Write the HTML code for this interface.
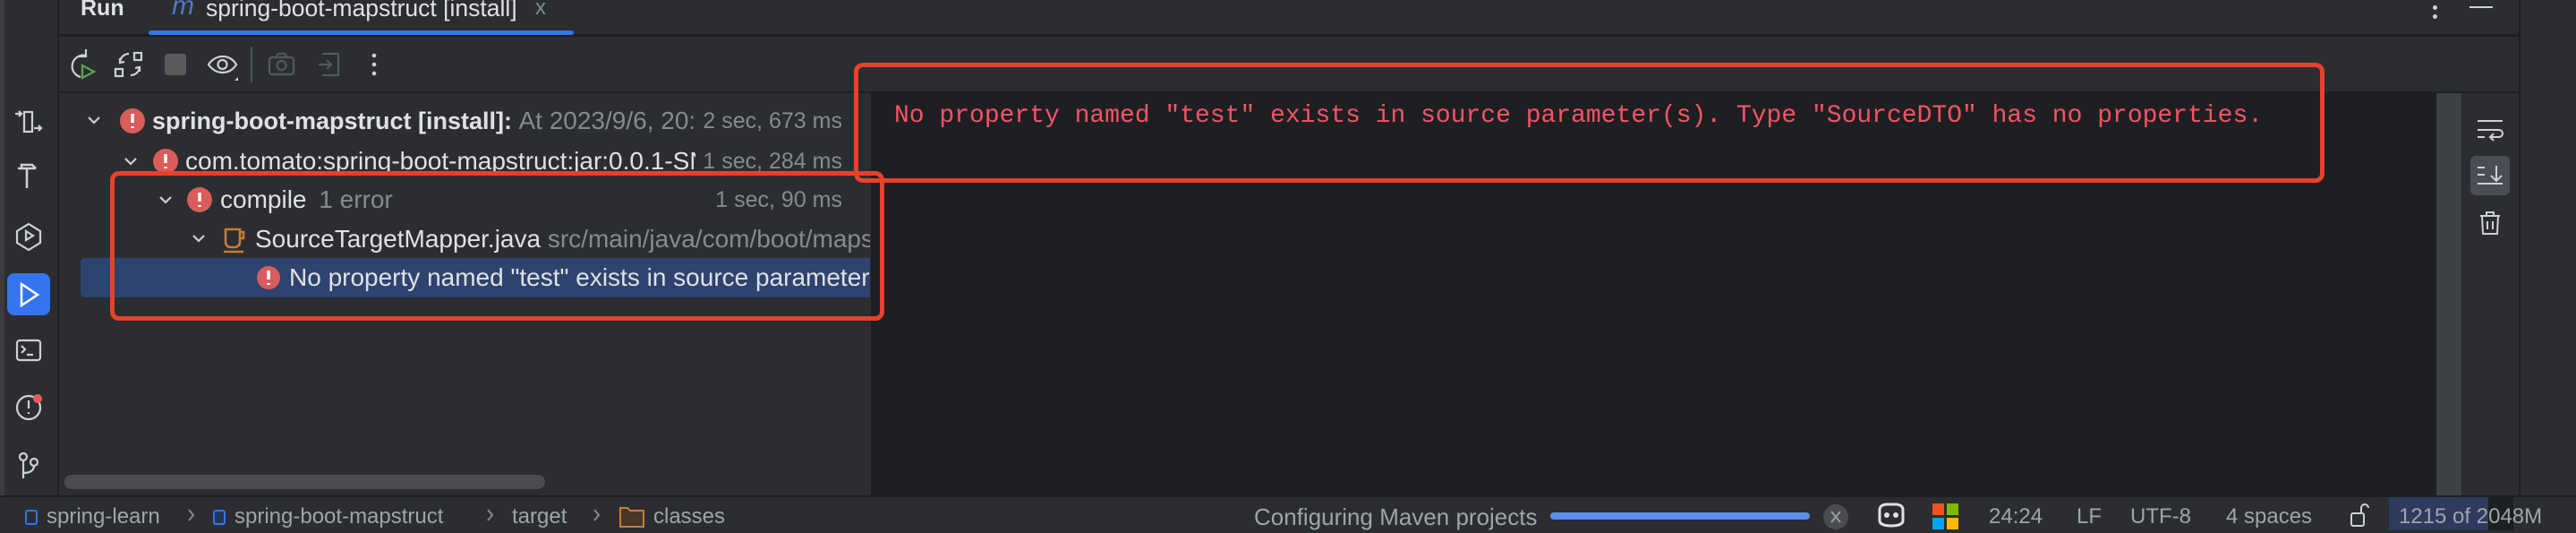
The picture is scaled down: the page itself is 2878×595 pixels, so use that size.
<!DOCTYPE html>
<html><head><meta charset="utf-8"><style>
*{margin:0;padding:0;box-sizing:border-box}
body{width:2878px;height:592px;background:#2b2d30;position:relative;overflow:hidden;font-family:"Liberation Sans",sans-serif;color:#dfe1e5}
.a{position:absolute;white-space:nowrap}
.g{color:#868a91}
svg{position:absolute;overflow:visible}
.t{font-size:28px;line-height:30px}
.tm{font-size:25px;line-height:30px;text-align:right;width:164px;left:777px;background:#2b2d30}
</style></head><body>
<div class="a" style="left:0;top:0;width:5px;height:553px;background:#3a3c40"></div>
<div class="a" style="left:64px;top:0;width:2px;height:553px;background:#1e1f22"></div>
<div class="a" style="left:66px;top:38px;width:2748px;height:3px;background:#1e1f22"></div>
<div class="a" style="left:66px;top:102px;width:2748px;height:2px;background:#1e1f22"></div>
<div class="a" style="left:2814px;top:0;width:2px;height:553px;background:#1e1f22"></div>
<div class="a" style="left:90px;top:-6px;font-size:25px;font-weight:bold;line-height:30px">Run</div>
<div class="a" style="left:192px;top:-8px;font-size:30px;font-style:italic;color:#4f7bd0;line-height:30px">m</div>
<div class="a" style="left:230px;top:-6px;font-size:26.5px;line-height:30px">spring-boot-mapstruct [install]</div>
<div class="a g" style="left:598px;top:-6px;font-size:24px;line-height:30px">x</div>
<div class="a" style="left:166px;top:34px;width:475px;height:5px;border-radius:3px;background:#3574f0"></div>
<div class="a" style="left:2718px;top:6px;width:5px;height:5px;border-radius:50%;background:#ced0d6"></div>
<div class="a" style="left:2718px;top:16px;width:5px;height:5px;border-radius:50%;background:#ced0d6"></div>
<div class="a" style="left:2759px;top:7px;width:26px;height:2px;background:#ced0d6"></div>
<svg style="left:0;top:0" width="500" height="110" fill="none" stroke-width="2.2">
 <path d="M96 62 A12 12 0 1 0 90 86" stroke="#ced0d6"/><path d="M96 55v8h-8" stroke="#ced0d6"/>
 <path d="M92 73l13 7-13 7z" stroke="#57a64a"/>
 <rect x="150" y="59" width="8" height="8" stroke="#ced0d6"/><rect x="129" y="77" width="8" height="8" stroke="#ced0d6"/>
 <path d="M144 60a10 10 0 0 0-10 10M134 65l0 5 5-1" stroke="#ced0d6"/><path d="M146 84a10 10 0 0 0 10-9M156 80l0-5-5 1" stroke="#ced0d6"/>
 <rect x="184" y="60" width="24" height="24" rx="3" fill="#5a5a5a" stroke="none"/>
 <path d="M233 72c8-12 24-12 31 0c-7 12-23 12-31 0z" stroke="#ced0d6"/><circle cx="248.5" cy="72" r="5" stroke="#ced0d6"/>
 <path d="M262 90l4-4v4z" fill="#ced0d6" stroke="none"/>
 <path d="M281 52v40" stroke="#4e5157"/>
 <rect x="301" y="64" width="27" height="19" rx="3" stroke="#55585e"/><circle cx="314.5" cy="73" r="5" stroke="#55585e"/><path d="M308 64l3-4h7l3 4" stroke="#55585e"/>
 <path d="M360 60h18v24h-18M356 72h14M365 67l5 5-5 5" stroke="#55585e"/>
 <circle cx="418" cy="62" r="2.3" fill="#ced0d6" stroke="none"/><circle cx="418" cy="72" r="2.3" fill="#ced0d6" stroke="none"/><circle cx="418" cy="82" r="2.3" fill="#ced0d6" stroke="none"/>
</svg>
<svg style="left:0;top:0" width="64" height="553" fill="none" stroke="#ced0d6" stroke-width="2.2">
 <rect x="27" y="125" width="9" height="22"/><path d="M17 127h7M21 124l3 3-3 3M38 143h8M43 140l3 3-3 3"/>
 <path d="M20 188h20M24 188v-4h12l4 4M30 188v22" stroke-width="2.6"/>
 <path d="M32 250l13 8v13l-13 8-13-8v-13z"/><path d="M29 258l8 5-8 5z"/>
 <rect x="8" y="305" width="48" height="47" rx="8" fill="#3574f0" stroke="none"/><path d="M24 317l18 12-18 12z" stroke="#fff" stroke-width="2.5"/>
 <rect x="19" y="380" width="26" height="22" rx="3"/><path d="M24 386l4 4-4 4M30 396h7"/>
 <circle cx="32" cy="455" r="13"/><path d="M32 447v9M32 460v2"/><circle cx="42" cy="445" r="5" fill="#e55b5b" stroke="none"/>
 <circle cx="26" cy="510" r="4"/><circle cx="38" cy="516" r="4"/><path d="M26 514v20M38 520c0 6-6 8-12 8"/>
</svg>
<div class="a" style="left:90px;top:288px;width:882px;height:44px;background:#2e436e;border-radius:5px 0 0 5px"></div>
<svg style="left:0;top:0" width="980" height="360" fill="none" stroke="#ced0d6" stroke-width="2.2">
 <path d="M99 131l6 6 6-6M140 177l6 6 6-6M179 220l6 6 6-6M216 263l6 6 6-6"/>
 <circle cx="148" cy="135" r="14" fill="#db5c5c" stroke="none"/>
 <circle cx="185" cy="180" r="14" fill="#db5c5c" stroke="none"/>
 <circle cx="223" cy="223" r="14" fill="#db5c5c" stroke="none"/>
 <circle cx="300" cy="310" r="13" fill="#db5c5c" stroke="none"/>
 <g stroke="#fff" stroke-width="3.5"><path d="M148 127v10M185 172v10M223 215v10M300 302v10"/><path d="M148 141v2M185 186v2M223 229v2M300 316v2"/></g>
 <path d="M252 256h16v14c0 4-3 6-6 6h-4c-3 0-6-2-6-6zM268 259h4v7h-4M250 281h22" stroke="#c77c3c" stroke-width="2.6"/>
</svg>
<div class="a t" style="left:170px;top:120px;font-weight:bold;font-size:27px;width:606px;overflow:hidden">spring-boot-mapstruct [install]: <span class="g" style="font-weight:normal;font-size:28px">At 2023/9/6, 20:30</span></div>
<div class="a tm g" style="top:120px">2 sec, 673 ms</div>
<div class="a t" style="left:207px;top:165px;width:570px;overflow:hidden">com.tomato:spring-boot-mapstruct:jar:0.0.1-SNAPSHOT</div>
<div class="a tm g" style="top:165px">1 sec, 284 ms</div>
<div class="a t" style="left:246px;top:208px">compile <span class="g" style="margin-left:6px">1 error</span></div>
<div class="a tm g" style="top:208px">1 sec, 90 ms</div>
<div class="a t" style="left:285px;top:252px;width:687px;overflow:hidden">SourceTargetMapper.java <span class="g">src/main/java/com/boot/mapstruct</span></div>
<div class="a t" style="left:323px;top:295px;width:649px;overflow:hidden">No property named "test" exists in source parameter(s).</div>
<div class="a" style="left:72px;top:530px;width:537px;height:16px;border-radius:8px;background:#4a4c50"></div>
<div class="a" style="left:973px;top:104px;width:1749px;height:449px;background:#1e1f22"></div>
<div class="a" style="left:2722px;top:104px;width:28px;height:449px;background:#3e4145"></div>
<div class="a" style="left:999px;top:112px;font-family:'Liberation Mono',monospace;font-size:28px;line-height:36px;color:#f75464">No property named "test" exists in source parameter(s). Type "SourceDTO" has no properties.</div>
<div class="a" style="left:2760px;top:174px;width:44px;height:44px;border-radius:6px;background:#4a4d53"></div>
<svg style="left:0;top:0" width="2878" height="300" fill="none" stroke="#ced0d6" stroke-width="2">
 <path d="M2768 135h28M2768 153h8M2768 145h24a4 4 0 0 1 0 8h-10M2786 149l-4 4 4 4"/>
 <path d="M2768 187h8M2768 195h8M2768 205h28M2789 185v17M2783 196l6 6 6-6"/>
 <path d="M2771 241h22M2778 241v-4h8v4M2773 241l1 20h16l1-20M2779 247v9M2785 247v9"/>
</svg>
<div class="a" style="left:954px;top:70px;width:1643px;height:134px;border:5px solid #e8412c;border-radius:10px"></div>
<div class="a" style="left:123px;top:191px;width:865px;height:167px;border:5px solid #e8412c;border-radius:10px"></div>
<div class="a" style="left:0;top:553px;width:2878px;height:39px;background:#2b2d30;border-top:2px solid #1e1f22"></div>
<svg style="left:0;top:553px" width="2878" height="39" fill="none" stroke-width="2">
 <rect x="29" y="17" width="12" height="15" rx="2" stroke="#3574f0"/>
 <rect x="239" y="17" width="12" height="15" rx="2" stroke="#3574f0" fill="#253556"/>
 <path d="M211 16l5 6-5 6M545 16l5 6-5 6M664 16l5 6-5 6" stroke="#868a91"/>
 <path d="M693 14h8l3 3h15v18h-26z" stroke="#c77c3c" fill="#4a3529"/>
 <rect x="1732" y="19" width="290" height="8" rx="4" fill="#5a8ff0" stroke="none"/>
 <circle cx="2051" cy="24" r="14" fill="#4a4c50" stroke="none"/><path d="M2046 18l10 12M2056 18l-10 12" stroke="#9a9ea5"/>
 <path d="M2100 16c0-4 4-6 8-6h10c4 0 8 2 8 6v12c0 4-5 6-13 6s-13-2-13-6z" stroke="#dfe1e5" stroke-width="3"/>
 <circle cx="2108" cy="22" r="3" fill="#dfe1e5" stroke="none"/><circle cx="2118" cy="22" r="3" fill="#dfe1e5" stroke="none"/>
 <rect x="2159" y="9" width="13" height="13" fill="#f25022" stroke="none"/><rect x="2175" y="9" width="13" height="13" fill="#7fba00" stroke="none"/>
 <rect x="2159" y="25" width="13" height="13" fill="#00a4ef" stroke="none"/><rect x="2175" y="25" width="13" height="13" fill="#ffb900" stroke="none"/>
 <rect x="2627" y="20" width="14" height="14" rx="2" stroke="#ced0d6"/><path d="M2638 20v-6a4 4 0 0 1 8 0" stroke="#ced0d6"/>
 <rect x="2669" y="2" width="111" height="37" fill="#2e3b5e" stroke="none"/>
 <rect x="2780" y="2" width="28" height="37" fill="#1e1f22" stroke="none"/>
</svg>
<div class="a" style="left:0;top:559px;width:2878px;font-size:24px;line-height:36px;color:#a0a4ab">
 <span class="a" style="left:52px">spring-learn</span>
 <span class="a" style="left:262px">spring-boot-mapstruct</span>
 <span class="a" style="left:572px">target</span>
 <span class="a" style="left:730px">classes</span>
 <span class="a" style="left:1401px;font-size:26px">Configuring Maven projects</span>
 <span class="a" style="left:2222px">24:24</span>
 <span class="a" style="left:2320px">LF</span>
 <span class="a" style="left:2380px">UTF-8</span>
 <span class="a" style="left:2487px">4 spaces</span>
 <span class="a" style="left:2680px">1215 of 2048M</span>
</div>
</body></html>
